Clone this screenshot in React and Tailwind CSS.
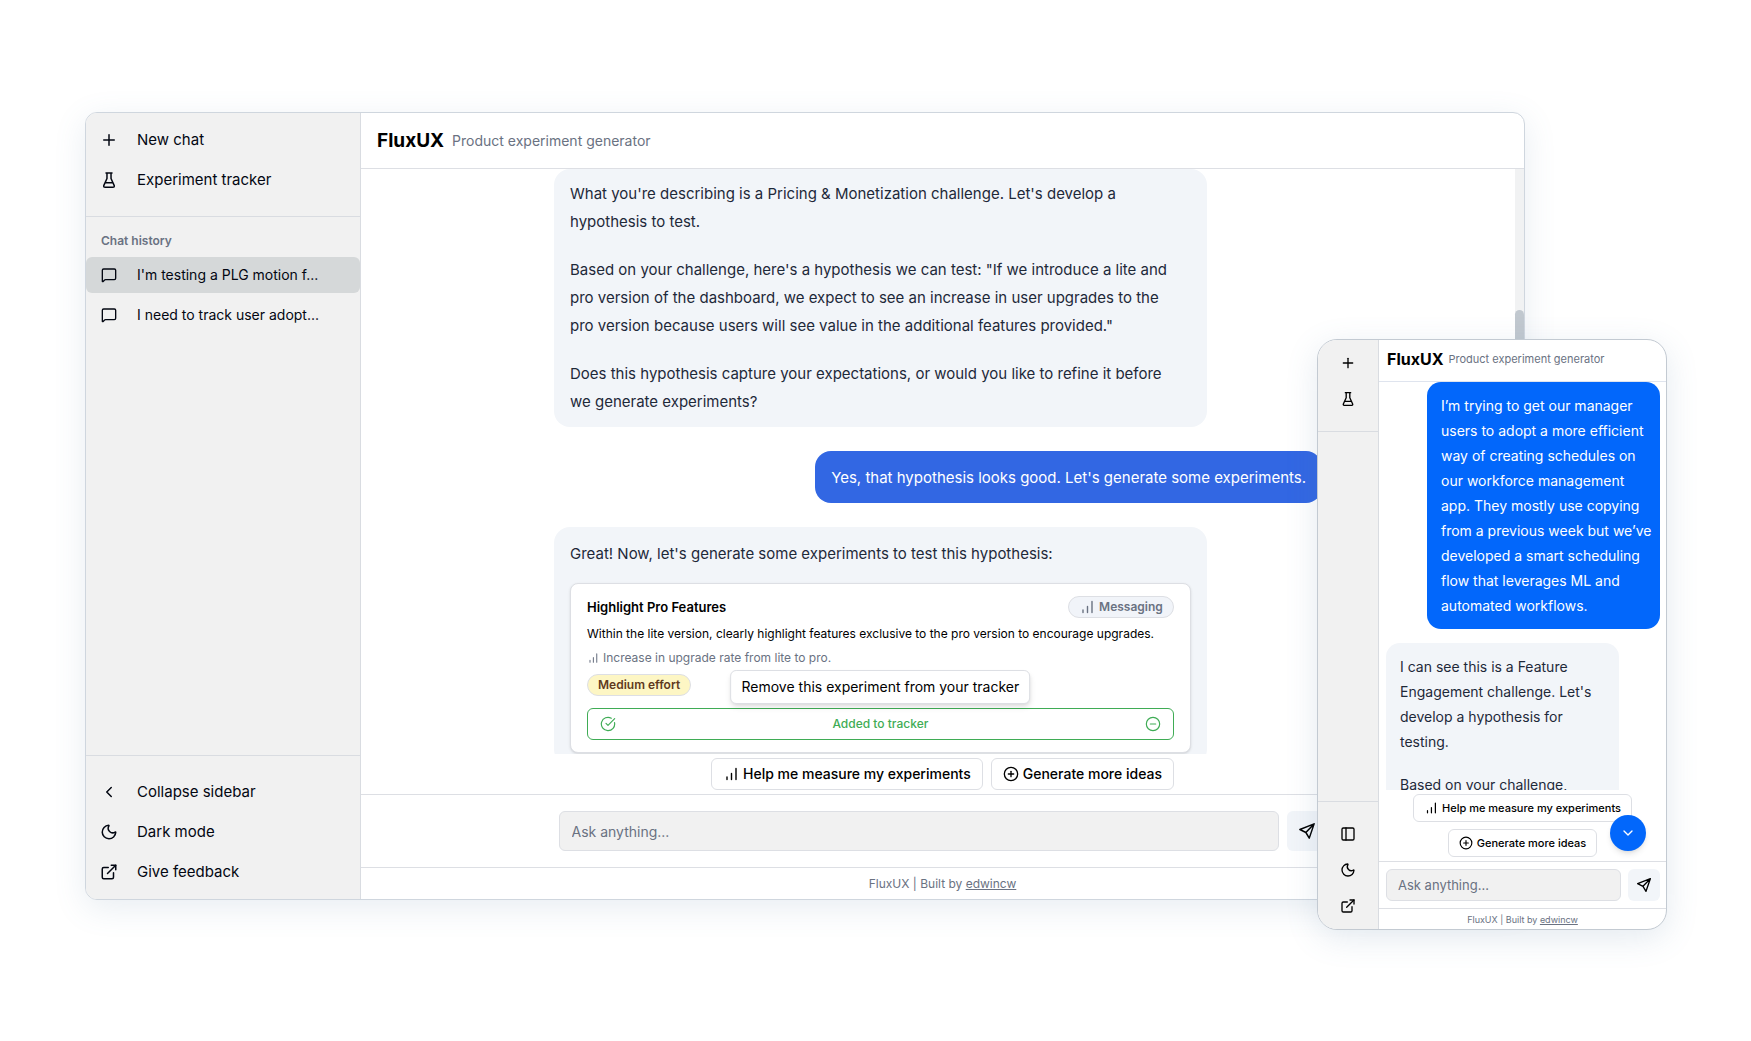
import {
  Plus,
  MessageSquare,
  ChevronLeft,
  ChevronDown,
  Moon,
  CirclePlus,
  CircleCheckBig,
  CircleMinus,
  PanelLeft,
} from "lucide-react";
import { FiExternalLink } from "react-icons/fi";

const BarsIcon = ({ className }) => (
  <svg viewBox="0 0 16 16" className={className} fill="none" stroke="currentColor" strokeWidth="1.4" strokeLinecap="round" aria-hidden="true">
    <path d="M4 11v2.500M8.500 7.500v6M13 2.500v11" />
  </svg>
);

const FlaskIcon = ({ className }) => (
  <svg viewBox="0 0 24 24" className={className} fill="none" stroke="currentColor" strokeWidth="2" strokeLinecap="round" strokeLinejoin="round" aria-hidden="true">
    <path d="M8 2.500h8M9.300 3v7L5 19.500a1.400 1.400 0 0 0 1.200 2h11.600a1.400 1.400 0 0 0 1.200-2L14.700 10V3M7.500 15.500h9" />
  </svg>
);

const SendIcon = ({ className }) => (
  <svg viewBox="0 0 24 24" className={className} fill="none" stroke="currentColor" strokeWidth="2" strokeLinecap="round" strokeLinejoin="round" aria-hidden="true">
    <path d="M21.500 2.500 2.500 10l8 4 4.500 7.500zM21.500 2.500l-11 11.500" />
  </svg>
);

const TOP_LINKS = [
  { label: "New chat", icon: Plus },
  { label: "Experiment tracker", icon: FlaskIcon },
];

const BOTTOM_LINKS = [
  { label: "Collapse sidebar", icon: ChevronLeft, compactIcon: PanelLeft },
  { label: "Dark mode", icon: Moon },
  { label: "Give feedback", icon: FiExternalLink },
];

const HISTORY = ["I'm testing a PLG motion f...", "I need to track user adopt..."];

function SidebarLink({ label, icon: Icon }) {
  return (
    <button className="flex h-9 w-full items-center gap-[19px] px-[14px] text-left text-[15px] text-gray-950">
      <Icon className="size-[18px] shrink-0" />
      {label}
    </button>
  );
}

function Sidebar() {
  return (
    <aside className="flex w-[275px] shrink-0 flex-col border-r border-[#d9dce1] bg-[#f1f1f1]">
      <nav className="flex flex-col gap-1 border-b border-[#d9dce1] pt-[9px] pb-[18px]">
        {TOP_LINKS.map((link) => (
          <SidebarLink key={link.label} {...link} />
        ))}
      </nav>
      <div className="flex-1 pt-4">
        <h2 className="px-[15px] pb-2 text-xs leading-4 font-semibold text-gray-500">Chat history</h2>
        <div className="flex flex-col gap-1">
          {HISTORY.map((title, i) => (
            <button
              key={title}
              className={`flex h-9 items-center gap-5 rounded-md px-[15px] text-left text-sm text-gray-950 ${i === 0 ? "bg-[#d5d8d9]" : ""}`}
            >
              <MessageSquare className="size-4 shrink-0" />
              {title}
            </button>
          ))}
        </div>
      </div>
      <nav className="flex flex-col gap-1 border-t border-[#d9dce1] py-[18px] pb-[9px]">
        {BOTTOM_LINKS.map((link) => (
          <SidebarLink key={link.label} {...link} />
        ))}
      </nav>
    </aside>
  );
}

function ExperimentCard() {
  return (
    <div className="relative rounded-lg border border-[#dddfe4] bg-white px-4 pt-3 pb-3 text-black shadow-sm">
      <div className="flex items-center justify-between">
        <h3 className="text-[13px] leading-5 font-semibold">Highlight Pro Features</h3>
        <span className="flex h-[22px] items-center gap-1 rounded-full border border-[#dddfe4] bg-[#f1f4f9] px-[10px] text-xs font-semibold text-gray-500">
          <BarsIcon className="size-4" />
          Messaging
        </span>
      </div>
      <p className="mt-2 text-xs leading-4">
        Within the lite version, clearly highlight features exclusive to the pro version to encourage upgrades.
      </p>
      <p className="mt-2 flex items-center gap-1 text-xs leading-4 text-gray-500">
        <BarsIcon className="size-3" />
        Increase in upgrade rate from lite to pro.
      </p>
      <div className="mt-2 flex">
        <span className="flex h-[22px] items-center rounded-full border border-[#dddfe4] bg-[#fdf6c4] px-[10px] text-xs font-semibold text-[#5f3a1d]">
          Medium effort
        </span>
      </div>
      <button className="mt-3 flex h-8 w-full items-center justify-between rounded-md border border-[#3fac55] px-3 text-xs font-medium text-[#3fac55]">
        <CircleCheckBig className="size-4" strokeWidth={1.75} />
        Added to tracker
        <CircleMinus className="size-4" strokeWidth={1.75} />
      </button>
      <div
        role="tooltip"
        className="absolute bottom-12 left-1/2 -translate-x-1/2 rounded-md border border-[#dddfe4] bg-white px-[10px] py-[6px] text-sm whitespace-nowrap shadow-md"
      >
        Remove this experiment from your tracker
      </div>
    </div>
  );
}

function DesktopWindow() {
  return (
    <section className="flex min-w-0 flex-1 overflow-hidden rounded-xl border border-[#cfd6de] bg-white shadow-[0_8px_32px_rgba(90,125,160,0.14)]">
      <Sidebar />
      <div className="flex min-w-0 flex-1 flex-col">
        <header className="flex h-14 shrink-0 items-center gap-2 border-b border-[#dddfe4] px-4">
          <h1 className="text-[19px] leading-7 font-bold text-black">FluxUX</h1>
          <p className="text-sm text-gray-500">Product experiment generator</p>
        </header>
        <div className="flex min-h-0 flex-1">
          <div className="min-w-0 flex-1 overflow-hidden">
            <div className="mx-auto flex max-w-3xl flex-col gap-6 text-[15px] leading-7 text-gray-800">
              <div className="flex w-[85%] flex-col gap-5 rounded-2xl bg-[#f2f5f9] py-[11px] pr-8 pl-4">
                <p>What you're describing is a Pricing &amp; Monetization challenge. Let's develop a hypothesis to test.</p>
                <p>
                  Based on your challenge, here's a hypothesis we can test: "If we introduce a lite and pro version of
                  the dashboard, we expect to see an increase in user upgrades to the pro version because users will see
                  value in the additional features provided."
                </p>
                <p>
                  Does this hypothesis capture your expectations, or would you like to refine it before we generate
                  experiments?
                </p>
              </div>
              <div className="self-end rounded-2xl bg-[#3267e3] px-4 pt-[13px] pb-[11px] text-white">
                Yes, that hypothesis looks good. Let's generate some experiments.
              </div>
              <div className="flex w-[85%] flex-col gap-[15px] rounded-2xl bg-[#f2f5f9] px-4 pt-[13px] pb-3">
                <p>Great! Now, let's generate some experiments to test this hypothesis:</p>
                <ExperimentCard />
              </div>
            </div>
          </div>
          <div className="w-[9px] shrink-0 bg-[#f1f2f3] pt-[141px]">
            <div className="h-48 rounded-full bg-[#c1c8cf]" />
          </div>
        </div>
        <div className="flex justify-center gap-2 py-1">
          <button className="flex h-8 items-center gap-1 rounded-md border border-[#dddfe4] px-[11px] text-sm font-medium text-black">
            <BarsIcon className="size-4" />
            Help me measure my experiments
          </button>
          <button className="flex h-8 items-center gap-1 rounded-md border border-[#dddfe4] px-[11px] text-sm font-medium text-black">
            <CirclePlus className="size-4" />
            Generate more ideas
          </button>
        </div>
        <form className="border-y border-[#dddfe4] py-4" onSubmit={(e) => e.preventDefault()}>
          <div className="mx-auto flex max-w-3xl gap-2">
            <input
              aria-label="Message"
              placeholder="Ask anything..."
              className="h-10 min-w-0 flex-1 rounded-md border border-[#dddfe4] bg-[#f1f1f1] px-3 text-sm placeholder:text-gray-500"
            />
            <button aria-label="Send" className="flex size-10 items-center justify-center rounded-md bg-[#f2f5f9]">
              <SendIcon className="size-[18px]" />
            </button>
          </div>
        </form>
        <footer className="pt-2 pb-[7px] text-center text-xs leading-4 text-gray-500">
          FluxUX | Built by{" "}
          <a href="#" className="underline">
            edwincw
          </a>
        </footer>
      </div>
    </section>
  );
}

function MobileSidebar() {
  return (
    <aside className="flex w-[61px] shrink-0 flex-col justify-between border-r border-[#d9dce1] bg-[#f1f1f1]">
      <nav className="flex flex-col items-center gap-1 border-b border-[#d9dce1] pt-[7px] pb-4">
        {TOP_LINKS.map(({ label, icon: Icon }) => (
          <button key={label} aria-label={label} className="flex size-8 items-center justify-center">
            <Icon className="size-4" />
          </button>
        ))}
      </nav>
      <nav className="flex flex-col items-center gap-1 border-t border-[#d9dce1] pt-4 pb-[7px]">
        {BOTTOM_LINKS.map(({ label, icon, compactIcon }) => {
          const Icon = compactIcon || icon;
          return (
            <button key={label} aria-label={label} className="flex size-8 items-center justify-center">
              <Icon className="size-4" />
            </button>
          );
        })}
      </nav>
    </aside>
  );
}

function MobileWindow() {
  return (
    <section className="absolute top-[339px] right-[84px] bottom-[111px] flex w-[350px] overflow-hidden rounded-[20px] border border-[#c3cad2] bg-white shadow-[0_8px_32px_rgba(90,125,160,0.16)]">
      <MobileSidebar />
      <div className="relative flex min-w-0 flex-1 flex-col">
        <header className="flex h-[42px] shrink-0 items-center gap-[5px] border-b border-[#dfe4ee] px-2 pb-[3px]">
          <h1 className="text-base font-bold text-black">FluxUX</h1>
          <p className="text-[11px] text-gray-500">Product experiment generator</p>
        </header>
        <div className="flex min-h-0 flex-1 flex-col gap-[14px] overflow-hidden pr-[6px] pl-[7px] text-sm leading-[25px]">
          <div className="w-[233px] shrink-0 self-end rounded-[14px] bg-[#0267fb] py-[11px] pr-[6px] pl-[14px] text-white">
            I’m trying to get our manager users to adopt a more efficient way of creating schedules on our workforce
            management app. They mostly use copying from a previous week but we’ve developed a smart scheduling flow
            that leverages ML and automated workflows.
          </div>
          <div className="flex w-[233px] shrink-0 flex-col gap-[18px] rounded-[14px] bg-[#f2f5f9] py-[11px] pr-[6px] pl-[14px] text-gray-800">
            <p>I can see this is a Feature Engagement challenge. Let's develop a hypothesis for testing.</p>
            <p>Based on your challenge,</p>
          </div>
        </div>
        <div className="flex flex-col items-center gap-[7px] py-1">
          <button className="flex h-7 items-center gap-1 rounded-md border border-[#dddfe4] px-[10px] text-[11px] font-medium text-black">
            <BarsIcon className="size-[14px]" />
            Help me measure my experiments
          </button>
          <button className="flex h-7 items-center gap-1 rounded-md border border-[#dddfe4] px-[10px] text-[11px] font-medium text-black">
            <CirclePlus className="size-[14px]" />
            Generate more ideas
          </button>
        </div>
        <button
          aria-label="Scroll to latest"
          className="absolute right-5 bottom-[78px] flex size-9 items-center justify-center rounded-full bg-[#0267fb] text-white shadow-md"
        >
          <ChevronDown className="size-4" />
        </button>
        <form className="flex gap-[7px] border-y border-[#dddfe4] py-[7px] pr-[6px] pl-[7px]" onSubmit={(e) => e.preventDefault()}>
          <input
            aria-label="Message"
            placeholder="Ask anything..."
            className="h-8 min-w-0 flex-1 rounded-md border border-[#dddfe4] bg-[#f1f1f1] px-[11px] text-[13px] placeholder:text-gray-500"
          />
          <button aria-label="Send" className="flex size-8 items-center justify-center rounded-md bg-[#f2f5f9]">
            <SendIcon className="size-4" />
          </button>
        </form>
        <footer className="pt-[5px] pb-[3px] text-center text-[9px] leading-3 text-gray-500">
          FluxUX | Built by{" "}
          <a href="#" className="underline">
            edwincw
          </a>
        </footer>
      </div>
    </section>
  );
}

export default function App() {
  return (
    <main className="relative flex h-screen bg-white pt-28 pr-[226px] pb-[141px] pl-[85px] font-['Inter',sans-serif]">
      <DesktopWindow />
      <MobileWindow />
    </main>
  );
}
